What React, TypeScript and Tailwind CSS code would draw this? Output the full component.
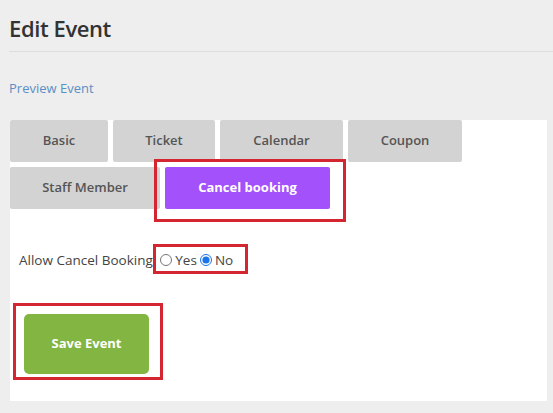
const tabs = [
  { label: "Basic", w: "w-[98px]" },
  { label: "Ticket", w: "w-[102px]" },
  { label: "Calendar", w: "w-[123px]" },
  { label: "Coupon", w: "w-[114px]" },
];

function Tab({ label, w }: { label: string; w: string }) {
  return (
    <div
      className={`${w} h-[42px] flex items-center justify-center rounded-[2px] bg-[#d3d3d3] text-[13px] font-semibold text-[#555555]`}
    >
      {label}
    </div>
  );
}

export default function App() {
  return (
    <div
      className="min-h-[413px] bg-[#eeeeee] pl-[9px] pt-[12px] pb-[12px]"
      style={{ fontFamily: '"Open Sans", "Liberation Sans", sans-serif' }}
    >
      <h1 className="text-[22px] leading-[32px] font-semibold tracking-[-0.4px] text-[#333333]">
        Edit Event
      </h1>
      <div className="mt-[7px] h-px bg-[#dddddd]" />
      <a className="mt-[26px] block text-[13px] leading-[20px] text-[#5b8fc4]">
        Preview Event
      </a>

      <div className="mt-[22px] ml-[1px] w-[537px] h-[281px] bg-white">
        <div className="flex gap-[5px]">
          {tabs.map((t) => (
            <Tab key={t.label} label={t.label} w={t.w} />
          ))}
        </div>
        <div className="mt-[5px] flex gap-[5px]">
          <Tab label="Staff Member" w="w-[150px]" />
          <div className="relative">
            <div className="w-[165px] h-[42px] flex items-center justify-center rounded-[2px] bg-[#a251fb] text-[13px] font-bold text-white">
              Cancel booking
            </div>
            <div className="absolute -left-[11px] -top-[8px] -right-[16px] -bottom-[13px] border-[3px] border-[#d32630]" />
          </div>
        </div>

        <div className="mt-[41px] ml-[9px] flex items-center text-[13.5px] leading-[20px] text-[#444444]">
          <span>Allow Cancel Booking:</span>
          <div className="relative ml-[4px] flex items-center">
            <input
              type="radio"
              name="cancel"
              className="m-0 w-[12px] h-[12px]"
            />
            <span className="ml-[3px]">Yes</span>
            <input
              type="radio"
              name="cancel"
              defaultChecked
              className="m-0 ml-[3px] w-[12px] h-[12px] accent-[#1a73e8]"
            />
            <span className="ml-[3px]">No</span>
            <div className="absolute -left-[7px] -top-[6px] -right-[15px] -bottom-[4px] border-[3px] border-[#d32630]" />
          </div>
        </div>

        <div className="relative mt-[44px] ml-[14px] w-[125px]">
          <button className="w-[125px] h-[60px] rounded-[5px] bg-[#82b541] text-[13px] font-bold text-white">
            Save Event
          </button>
          <div className="absolute -left-[11px] -top-[11px] -right-[14px] -bottom-[6px] border-[3px] border-[#d32630]" />
        </div>
      </div>
    </div>
  );
}
